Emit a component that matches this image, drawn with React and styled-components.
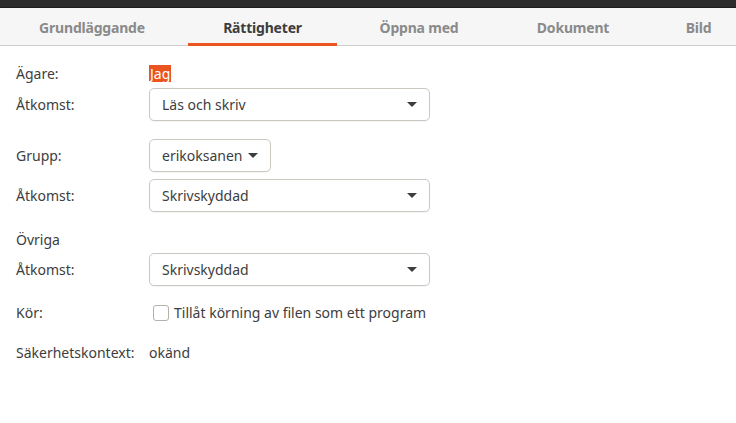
import React from "react";
import styled, { createGlobalStyle } from "styled-components";

const GlobalStyle = createGlobalStyle`
  html, body {
    margin: 0;
    padding: 0;
    background: #ffffff;
  }
  body {
    font-family: "Noto Sans", "Open Sans", sans-serif;
    font-size: 14px;
    color: #3d3d3d;
  }
`;

const tabs = [
  { label: "Grundläggande", pad: "0 4px 0 0" },
  { label: "Rättigheter", active: true },
  { label: "Öppna med" },
  { label: "Dokument" },
  { label: "Bild", pad: "0 0 0 16px" },
];

const Caret = () => (
  <svg width="10" height="5" viewBox="0 0 10 5">
    <path d="M0 0 L10 0 L5 5 Z" fill="#3d3d3d" />
  </svg>
);

const Combo = ({ value, wide }) => (
  <ComboBox wide={wide}>
    <span>{value}</span>
    <Caret />
  </ComboBox>
);

const App = () => {
  return (
    <>
      <GlobalStyle />
      <Window>
        <TitleStrip />
        <TabBar>
          {tabs.map((t) => (
            <Tab key={t.label} active={t.active} pad={t.pad}>
              {t.label}
            </Tab>
          ))}
        </TabBar>
        <Form>
          <Row space={19} height={17}>
            <Label>Ägare:</Label>
            <Owner>Jag</Owner>
          </Row>
          <Row space={6}>
            <Label>Åtkomst:</Label>
            <Combo wide value="Läs och skriv" />
          </Row>
          <Row space={18}>
            <Label>Grupp:</Label>
            <Combo value="erikoksanen" />
          </Row>
          <Row space={7}>
            <Label>Åtkomst:</Label>
            <Combo wide value="Skrivskyddad" />
          </Row>
          <Row space={18} height={18}>
            <Label>Övriga</Label>
          </Row>
          <Row space={5}>
            <Label>Åtkomst:</Label>
            <Combo wide value="Skrivskyddad" />
          </Row>
          <Row space={17} height={19}>
            <Label>Kör:</Label>
            <Check>
              <Box />
              <span>Tillåt körning av filen som ett program</span>
            </Check>
          </Row>
          <Row space={21} height={18}>
            <Label>Säkerhetskontext:</Label>
            <Value>okänd</Value>
          </Row>
        </Form>
      </Window>
    </>
  );
};

export default App;

const Window = styled.div`
  width: 736px;
  height: 423px;
  background: #ffffff;
  display: flex;
  flex-direction: column;
`;

const TitleStrip = styled.div`
  height: 8px;
  background: #2c2c2c;
  border-bottom: 1px solid #1f1f1f;
  box-sizing: border-box;
`;

const TabBar = styled.div`
  height: 38px;
  background: #f6f6f6;
  border-bottom: 1px solid #cdcdcd;
  display: grid;
  grid-template-columns: 188px 149px 164px 144px 91px;
  box-sizing: border-box;
`;

const Tab = styled.div`
  display: flex;
  align-items: center;
  justify-content: center;
  padding: ${({ pad }) => pad || "0"};
  font-size: 14px;
  font-weight: 700;
  color: ${({ active }) => (active ? "#3d3d3d" : "#8a8a8a")};
  border-bottom: 3px solid ${({ active }) => (active ? "#e95420" : "transparent")};
  margin-bottom: -1px;
  padding-top: 3px;
  letter-spacing: -0.2px;
`;

const Form = styled.div`
  display: flex;
  flex-direction: column;
  padding-left: 16px;
`;

const Row = styled.div`
  display: flex;
  align-items: center;
  margin-top: ${({ space }) => space}px;
  height: ${({ height }) => (height ? `${height}px` : "auto")};
`;

const Label = styled.div`
  width: 133px;
  flex-shrink: 0;
  white-space: nowrap;
`;

const Owner = styled.span`
  background: #e95420;
  color: #ffffff;
  padding: 0 1px;
  line-height: 17px;
`;

const Value = styled.span``;

const ComboBox = styled.div`
  box-sizing: border-box;
  width: ${({ wide }) => (wide ? "281px" : "122px")};
  height: 33px;
  border: 1px solid #cdc7c2;
  border-radius: 5px;
  background: #ffffff;
  display: flex;
  align-items: center;
  justify-content: space-between;
  padding: 0 12px 0 12px;
  box-shadow: 0 1px 0 rgba(0, 0, 0, 0.04);
`;

const Check = styled.div`
  display: flex;
  align-items: center;
  gap: 5px;
  padding-left: 4px;
`;

const Box = styled.div`
  width: 16px;
  height: 16px;
  box-sizing: border-box;
  border: 1px solid #b6b0ab;
  border-radius: 3px;
  background: #ffffff;
`;
